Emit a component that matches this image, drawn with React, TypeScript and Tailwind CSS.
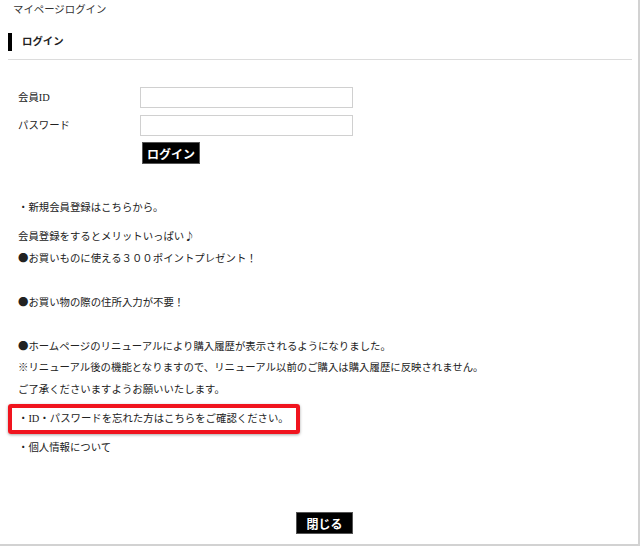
import React from "react";

const font = { fontFamily: '"Liberation Serif", "Noto Sans CJK JP", serif' };
const cjk = { fontFamily: '"Noto Sans CJK JP", sans-serif' };

function Dot() {
  return <span style={cjk}>●</span>;
}

function Line({ children, className = "" }: { children?: React.ReactNode; className?: string }) {
  return <div className={`h-[22px] leading-[22px] whitespace-nowrap ${className}`}>{children}</div>;
}

export default function App() {
  return (
    <div
      className="w-[640px] h-[546px] box-border border-r-2 border-b-2 border-[#d2d2d2] bg-white text-[#222] text-[10.4px] overflow-hidden"
      style={font}
    >
      <div className="pl-[13px] h-[20px] leading-[20px] text-[#333]">マイページログイン</div>

      <div className="mt-[13px] ml-[8px] flex items-center h-[18px]">
        <div className="w-[4px] h-[18px] bg-black" />
        <div className="ml-[10px] font-bold text-[#222]">ログイン</div>
      </div>

      <div className="mt-[8px] ml-[8px] w-[624px] border-t border-[#dcdcdc]" />

      <div className="mt-[27px] pl-[18px] flex flex-col">
        <div className="flex items-center h-[21px]">
          <div className="w-[122px]">会員ID</div>
          <input className="w-[213px] h-[21px] box-border border border-[#d0d0d0] bg-white outline-none" />
        </div>
        <div className="mt-[7px] flex items-center h-[21px]">
          <div className="w-[122px]">パスワード</div>
          <input
            type="password"
            className="w-[213px] h-[21px] box-border border border-[#d0d0d0] bg-white outline-none"
          />
        </div>
        <div className="mt-[6px] pl-[124px]">
          <button
            className="w-[58px] h-[22px] bg-black text-white text-[12px] font-bold leading-[22px] border border-[#555]"
            style={cjk}
          >
            ログイン
          </button>
        </div>
      </div>

      <div className="mt-[33px] pl-[18px]">
        <Line>・新規会員登録はこちらから。</Line>
        <Line className="mt-[6px]">
          会員登録をするとメリットいっぱい<span style={cjk}>♪</span>
        </Line>
        <Line>
          <Dot />
          お買いものに使える３００ポイントプレゼント！
        </Line>
        <Line />
        <Line>
          <Dot />
          お買い物の際の住所入力が不要！
        </Line>
        <Line />
        <Line>
          <Dot />
          ホームページのリニューアルにより購入履歴が表示されるようになりました。
        </Line>
        <Line>※リニューアル後の機能となりますので、リニューアル以前のご購入は購入履歴に反映されません。</Line>
        <Line>ご了承くださいますようお願いいたします。</Line>
      </div>

      <div className="mt-[3px] ml-[8px] w-[292px] h-[30px] box-border border-[4px] border-[#f0141e] rounded-[3px] shadow-[0_1px_3px_rgba(0,0,0,0.35)] flex items-center pl-[6px]">
        ・ID・パスワードを忘れた方はこちらをご確認ください。
      </div>

      <div className="mt-[3px] pl-[18px]">
        <Line>・個人情報について</Line>
      </div>

      <div className="mt-[53px] pl-[296px]">
        <button
          className="w-[57px] h-[22px] bg-black text-white text-[12px] font-bold leading-[22px] border border-[#555]"
          style={cjk}
        >
          閉じる
        </button>
      </div>
    </div>
  );
}
